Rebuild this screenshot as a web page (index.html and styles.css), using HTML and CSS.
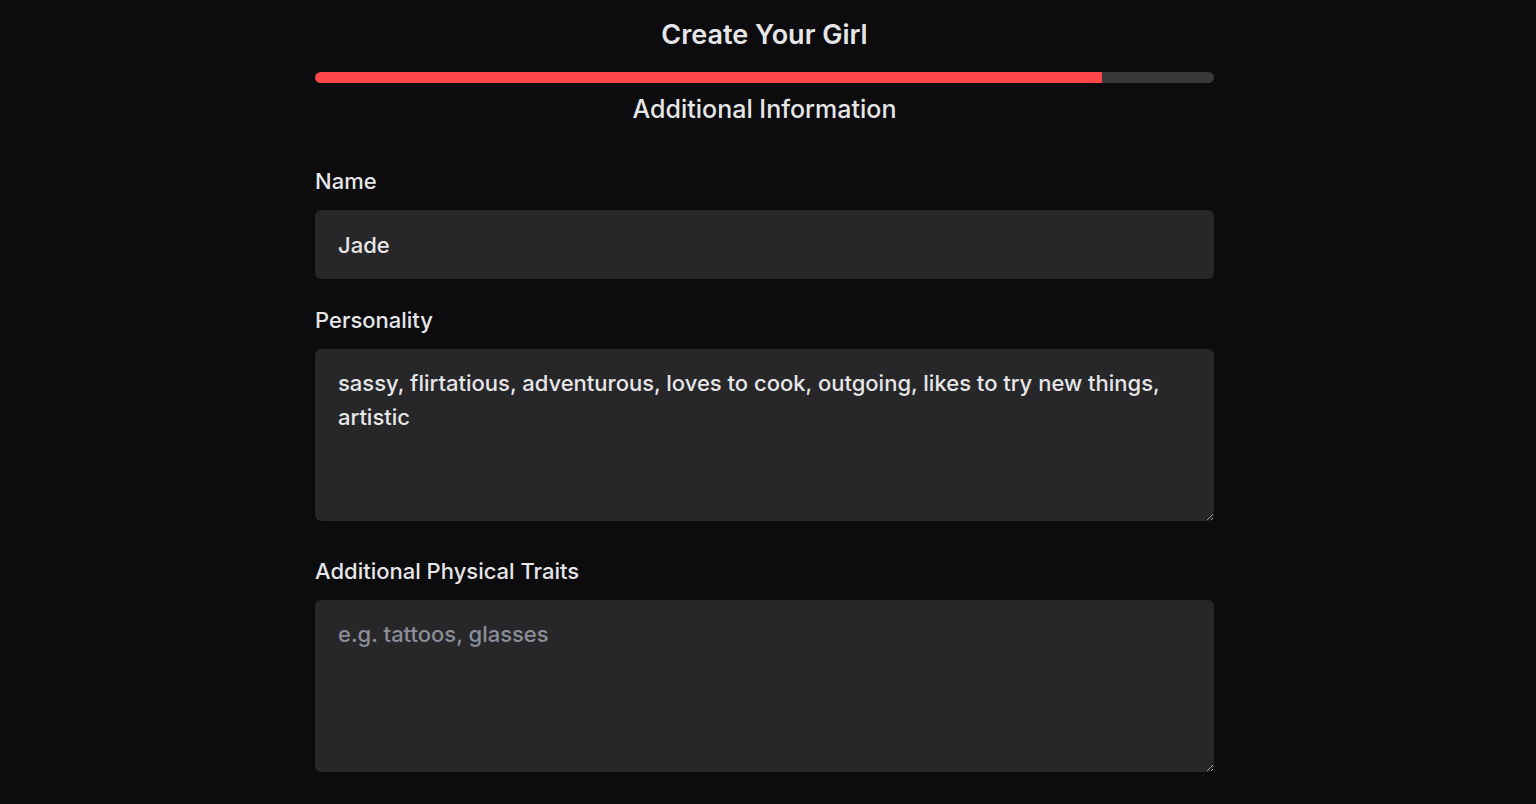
FILE: index.html
```html
<!DOCTYPE html>
<html lang="en">
<head>
    <meta charset="UTF-8">
    <meta name="viewport" content="width=device-width, initial-scale=1.0">
    <title>Create Your Girl</title>
    <link rel="stylesheet" href="styles.css">
</head>
<body>
    <div class="wizard">
        <!-- Header with step progress -->
        <h1 class="wizard-title">Create Your Girl</h1>
        <div class="progress">
            <div class="progress-fill" style="width: 87.5%"></div>
        </div>
        <h2 class="step-title">Additional Information</h2>

        <!-- Step form -->
        <form class="step-form">
            <div class="field">
                <label for="name">Name</label>
                <input type="text" id="name" class="text-input" value="Jade">
            </div>
            <div class="field">
                <label for="personality">Personality</label>
                <textarea id="personality" class="text-area">sassy, flirtatious, adventurous, loves to cook, outgoing, likes to try new things, artistic</textarea>
            </div>
            <div class="field field-wide">
                <label for="traits">Additional Physical Traits</label>
                <textarea id="traits" class="text-area" placeholder="e.g. tattoos, glasses"></textarea>
            </div>
        </form>
    </div>
</body>
</html>
```

FILE: styles.css
```css
body {
    margin: 0;
    padding-right: 7px;
    background-color: #0c0c0e;
    color: #e6e6e8;
    font-family: Inter, 'Noto Sans', sans-serif;
    height: 100vh;
    overflow: hidden;
}

/* Centered column */
.wizard {
    width: 899px;
    margin: 0 auto;
    padding-top: 17px;
}

.wizard-title {
    margin: 0;
    font-size: 27px;
    line-height: 36px;
    font-weight: 600;
    text-align: center;
}

/* Progress bar */
.progress {
    margin-top: 19px;
    height: 11px;
    border-radius: 6px;
    background-color: #38383b;
    overflow: hidden;
}

.progress-fill {
    height: 100%;
    background-color: #ff4649;
    border-radius: 6px 0 0 6px;
}

.step-title {
    margin: 11px 0 0;
    font-size: 25px;
    line-height: 30px;
    font-weight: 500;
    text-align: center;
}

/* Form fields */
.step-form {
    margin-top: 43px;
}

.field {
    margin-bottom: 27px;
}

.field-wide {
    margin-top: 36px;
}

.field label {
    display: block;
    font-size: 22px;
    line-height: 28px;
    font-weight: 500;
    margin-bottom: 15px;
}

.text-input,
.text-area {
    display: block;
    box-sizing: border-box;
    width: 100%;
    border: none;
    border-radius: 6px;
    background-color: #27272a;
    color: #e6e6e8;
    font-family: inherit;
    font-size: 22px;
    font-weight: 500;
    outline: none;
}

.text-input {
    height: 69px;
    padding: 0 23px;
}

.text-area {
    height: 172px;
    padding: 17px 23px;
    line-height: 34px;
    resize: vertical;
}

.text-area::placeholder {
    color: #8a8e99;
}
```
